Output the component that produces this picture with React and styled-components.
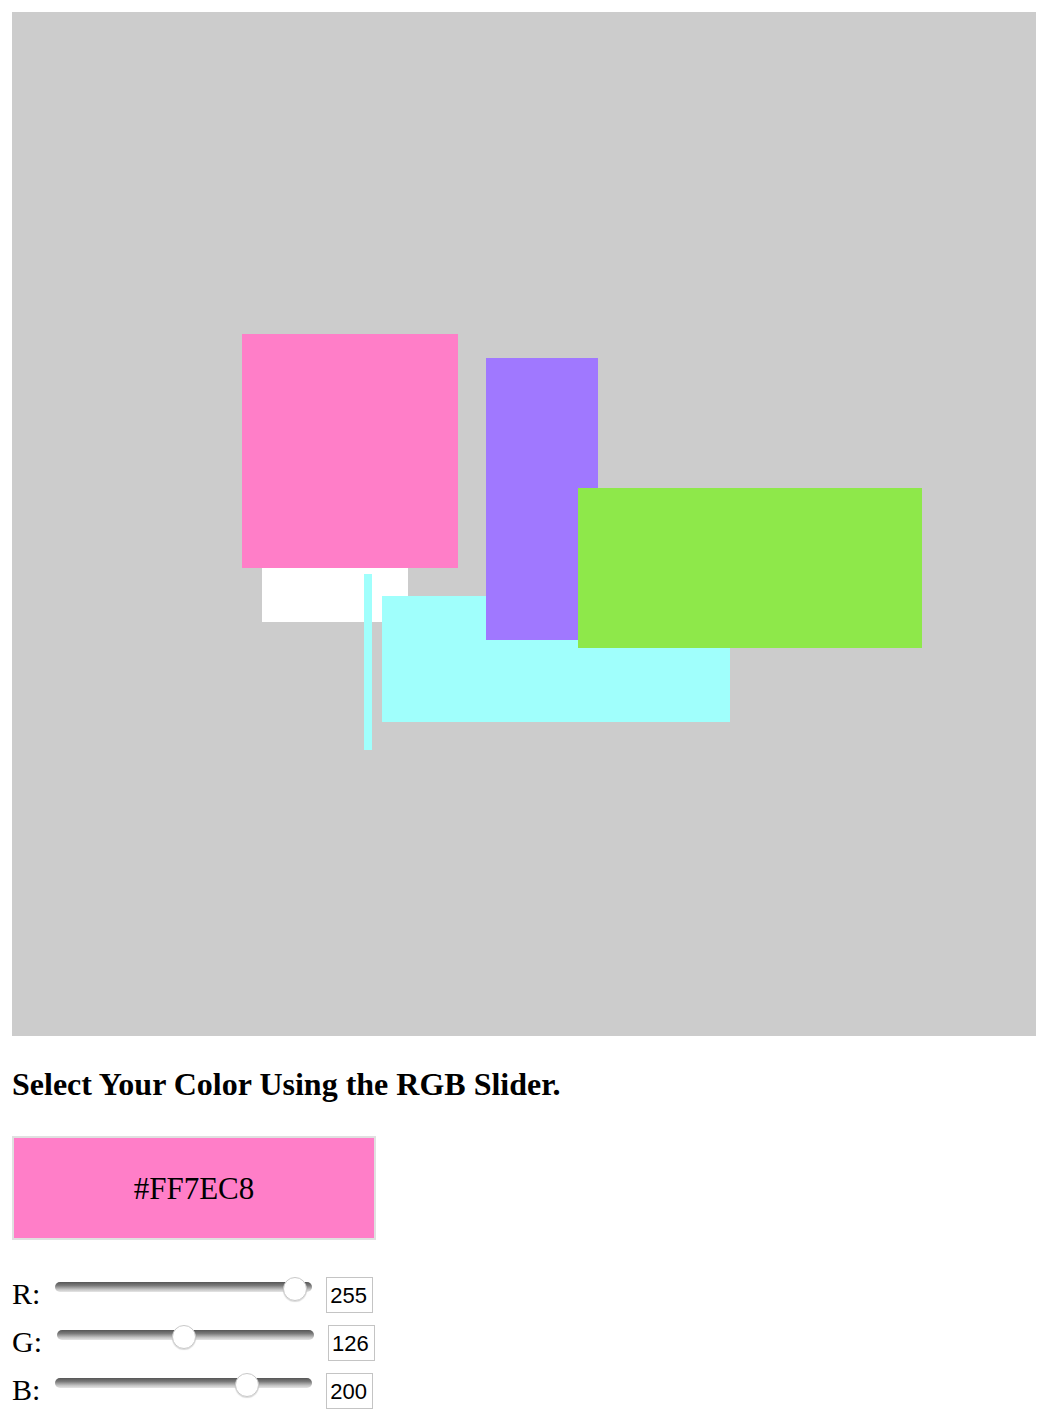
import React, { useState } from "react";
import styled, { createGlobalStyle } from "styled-components";

const GlobalStyle = createGlobalStyle`
  html, body {
    margin: 0;
    padding: 0;
    background: #ffffff;
  }
  body {
    font-family: "Liberation Serif", "Times New Roman", serif;
    color: #000;
  }
`;

const Page = styled.div`
  padding: 12px;
  display: flex;
  flex-direction: column;
  align-items: flex-start;
`;

const Canvas = styled.svg`
  display: block;
  width: 1024px;
  height: 1024px;
`;

const Title = styled.h1`
  margin: 30px 0 0;
  font-family: "Liberation Serif", "Times New Roman", serif;
  font-weight: 700;
  font-size: 32px;
  line-height: 36px;
  letter-spacing: 0;
`;

const Swatch = styled.div`
  margin-top: 34px;
  box-sizing: border-box;
  width: 364px;
  height: 104px;
  border: 2px solid #e0e0e0;
  background: ${(p) => p.$color};
  display: flex;
  align-items: center;
  justify-content: center;
  font-size: 31px;
  line-height: 34px;
  padding-top: 1px;
`;

const Sliders = styled.div`
  margin-top: 37px;
  display: flex;
  flex-direction: column;
  gap: 12px;
`;

const Row = styled.div`
  display: flex;
  align-items: flex-start;
  height: 36px;
`;

const Label = styled.span`
  font-size: 30px;
  line-height: 34px;
  margin-right: 15px;
`;

const Slider = styled.div`
  position: relative;
  width: 257px;
  height: 24px;
  margin-right: 14px;
`;

const Track = styled.div`
  margin-top: 5px;
  height: 10px;
  border-radius: 5px;
  background: linear-gradient(to bottom, #555555 0%, #7a7a7a 35%, #c4c4c4 75%, #e6e6e6 100%);
`;

const Thumb = styled.div`
  position: absolute;
  top: 0;
  width: 24px;
  height: 24px;
  box-sizing: border-box;
  border-radius: 50%;
  background: #ffffff;
  border: 1px solid #c9c9c9;
  box-shadow: 0 1px 1px rgba(0, 0, 0, 0.15);
`;

const ValueBox = styled.span`
  box-sizing: border-box;
  width: 47px;
  height: 36px;
  border: 1px solid #c4c4c4;
  padding: 5px 0 0 3px;
  font-family: "Liberation Sans", Arial, sans-serif;
  font-size: 22px;
  line-height: 25px;
`;

const toHex = (n) => n.toString(16).toUpperCase().padStart(2, "0");

function ColorSlider({ label, value }) {
  const center = 16 + (value / 255) * 224;
  return (
    <Row>
      <Label>{label}:</Label>
      <Slider>
        <Track />
        <Thumb style={{ left: `${center - 12}px` }} />
      </Slider>
      <ValueBox>{value}</ValueBox>
    </Row>
  );
}

export default function App() {
  const [rgb] = useState({ r: 255, g: 126, b: 200 });
  const hex = `#${toHex(rgb.r)}${toHex(rgb.g)}${toHex(rgb.b)}`;
  return (
    <>
      <GlobalStyle />
      <Page>
        <Canvas viewBox="0 0 1024 1024">
          <rect x="0" y="0" width="1024" height="1024" fill="#cccccc" />
          <rect x="250" y="520" width="146" height="90" fill="#ffffff" />
          <rect x="230" y="322" width="216" height="234" fill={hex} />
          <rect x="352" y="562" width="8" height="176" fill="#a0fffc" />
          <rect x="370" y="584" width="348" height="126" fill="#a0fffc" />
          <rect x="474" y="346" width="112" height="282" fill="#a078ff" />
          <rect x="566" y="476" width="344" height="160" fill="#8ee84a" />
        </Canvas>
        <Title>Select Your Color Using the RGB Slider.</Title>
        <Swatch $color={hex}>{hex}</Swatch>
        <Sliders>
          <ColorSlider label="R" value={rgb.r} />
          <ColorSlider label="G" value={rgb.g} />
          <ColorSlider label="B" value={rgb.b} />
        </Sliders>
      </Page>
    </>
  );
}
